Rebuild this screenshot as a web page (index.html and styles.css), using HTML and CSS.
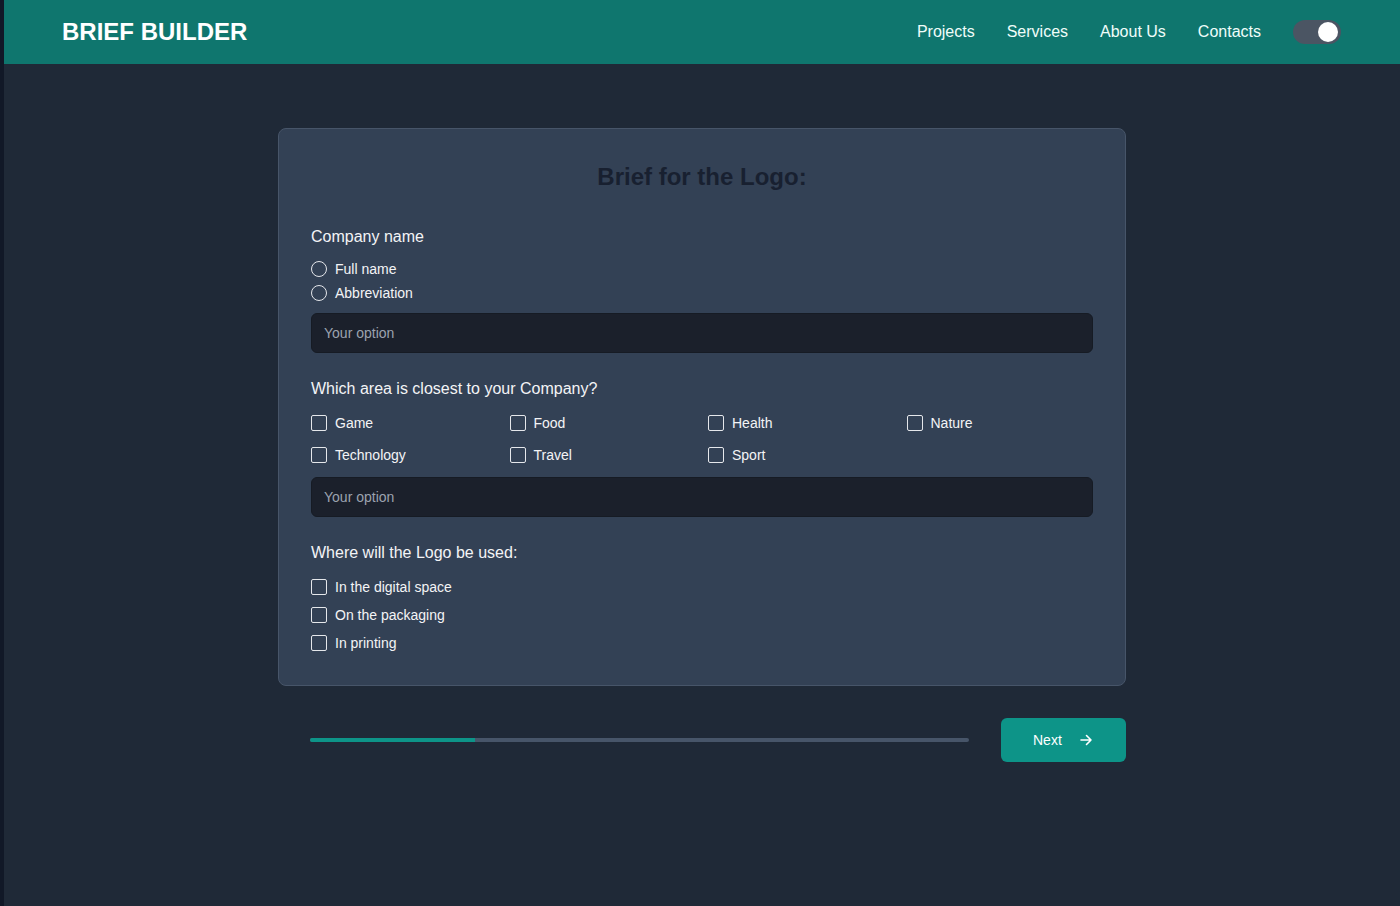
FILE: index.html
```html
<!DOCTYPE html>
<html lang="en">
<head>
<meta charset="utf-8">
<title>Brief Builder</title>
<link rel="stylesheet" href="styles.css">
</head>
<body>
<header class="header">
  <div class="logo">BRIEF BUILDER</div>
  <nav class="nav">
    <a class="nav-link" href="#">Projects</a>
    <a class="nav-link" href="#">Services</a>
    <a class="nav-link" href="#">About Us</a>
    <a class="nav-link" href="#">Contacts</a>
    <span class="toggle"><span class="knob"></span></span>
  </nav>
</header>
<main class="main">
  <form class="card">
    <h1 class="title">Brief for the Logo:</h1>

    <section class="section">
      <div class="label">Company name</div>
      <div class="radios">
        <label class="opt"><span class="radio"></span>Full name</label>
        <label class="opt"><span class="radio"></span>Abbreviation</label>
      </div>
      <div class="input">Your option</div>
    </section>

    <section class="section">
      <div class="label">Which area is closest to your Company?</div>
      <div class="grid">
        <label class="opt"><span class="check"></span>Game</label>
        <label class="opt"><span class="check"></span>Food</label>
        <label class="opt"><span class="check"></span>Health</label>
        <label class="opt"><span class="check"></span>Nature</label>
        <label class="opt"><span class="check"></span>Technology</label>
        <label class="opt"><span class="check"></span>Travel</label>
        <label class="opt"><span class="check"></span>Sport</label>
      </div>
      <div class="input">Your option</div>
    </section>

    <section class="section">
      <div class="label">Where will the Logo be used:</div>
      <div class="list">
        <label class="opt"><span class="check"></span>In the digital space</label>
        <label class="opt"><span class="check"></span>On the packaging</label>
        <label class="opt"><span class="check"></span>In printing</label>
      </div>
    </section>
  </form>

  <div class="footer">
    <div class="progress"><div class="progress-fill" style="width:25%"></div></div>
    <button class="next" type="button">Next
      <svg width="14" height="14" viewBox="0 0 14 14" fill="none" stroke="currentColor" stroke-width="1.6" stroke-linecap="round" stroke-linejoin="round"><path d="M2 7h10M7.5 2.5L12 7l-4.5 4.5"/></svg>
    </button>
  </div>
</main>
</body>
</html>
```
FILE: styles.css
```css
* { box-sizing: border-box; }
html, body { margin: 0; padding: 0; }
body {
  min-height: 906px;
  background: #1f2937;
  border-left: 4px solid #111827;
  font-family: "Liberation Sans", Arial, sans-serif;
  color: #f3f4f6;
}
.header {
  height: 64px;
  background: #0f766e;
  display: flex;
  align-items: center;
  justify-content: space-between;
  padding: 0 59px 0 58px;
}
.logo {
  font-size: 24px;
  font-weight: bold;
  color: #ffffff;
}
.nav {
  display: flex;
  align-items: center;
  gap: 32px;
}
.nav-link {
  color: #f0fdfa;
  text-decoration: none;
  font-size: 16px;
}
.toggle {
  width: 48px;
  height: 24px;
  border-radius: 12px;
  background: #4b5563;
  display: flex;
  align-items: center;
  justify-content: flex-end;
  padding: 0 3px;
}
.knob {
  width: 20px;
  height: 20px;
  border-radius: 50%;
  background: #ffffff;
}
.main {
  width: 848px;
  margin: 64px auto 0;
}
.card {
  background: #334155;
  border: 1px solid #475569;
  border-radius: 8px;
  padding: 32px 32px 30px;
  display: flex;
  flex-direction: column;
  gap: 23px;
}
.title {
  margin: 0 0 8px;
  text-align: center;
  font-size: 24px;
  line-height: 32px;
  font-weight: bold;
  color: #182030;
}
.section {
  display: flex;
  flex-direction: column;
}
.label {
  font-size: 16px;
  line-height: 24px;
  padding-top: 1px;
  color: #f3f4f6;
  margin-bottom: 8px;
}
.section + .section .label { margin-bottom: 10px; }
.opt {
  display: flex;
  align-items: center;
  gap: 8px;
  height: 24px;
  font-size: 14px;
  color: #f3f4f6;
}
.radios {
  display: flex;
  flex-direction: column;
  margin-bottom: 8px;
}
.radio {
  width: 16px;
  height: 16px;
  border: 1.5px solid #e5e7eb;
  border-radius: 50%;
  flex: none;
}
.check {
  width: 16px;
  height: 16px;
  border: 1.5px solid #e5e7eb;
  border-radius: 2px;
  flex: none;
}
.grid {
  display: grid;
  grid-template-columns: repeat(4, 1fr);
  column-gap: 12px;
  row-gap: 8px;
  margin-bottom: 10px;
}
.list {
  display: flex;
  flex-direction: column;
  gap: 4px;
}
.input {
  height: 40px;
  background: #1b202b;
  border: 1px solid #161b24;
  border-radius: 6px;
  padding: 0 12px;
  display: flex;
  align-items: center;
  font-size: 14px;
  color: #9ca3af;
}
.footer {
  display: flex;
  align-items: center;
  gap: 32px;
  margin-top: 32px;
  padding-left: 32px;
}
.progress {
  flex: 1;
  height: 4px;
  border-radius: 2px;
  background: #475569;
  overflow: hidden;
}
.progress-fill {
  height: 100%;
  background: #0d9488;
}
.next {
  width: 125px;
  height: 44px;
  border: none;
  border-radius: 6px;
  background: #0d9488;
  color: #ffffff;
  font-family: "Liberation Sans", Arial, sans-serif;
  font-size: 14px;
  display: flex;
  align-items: center;
  padding: 0 0 0 32px;
  gap: 17px;
}
```
